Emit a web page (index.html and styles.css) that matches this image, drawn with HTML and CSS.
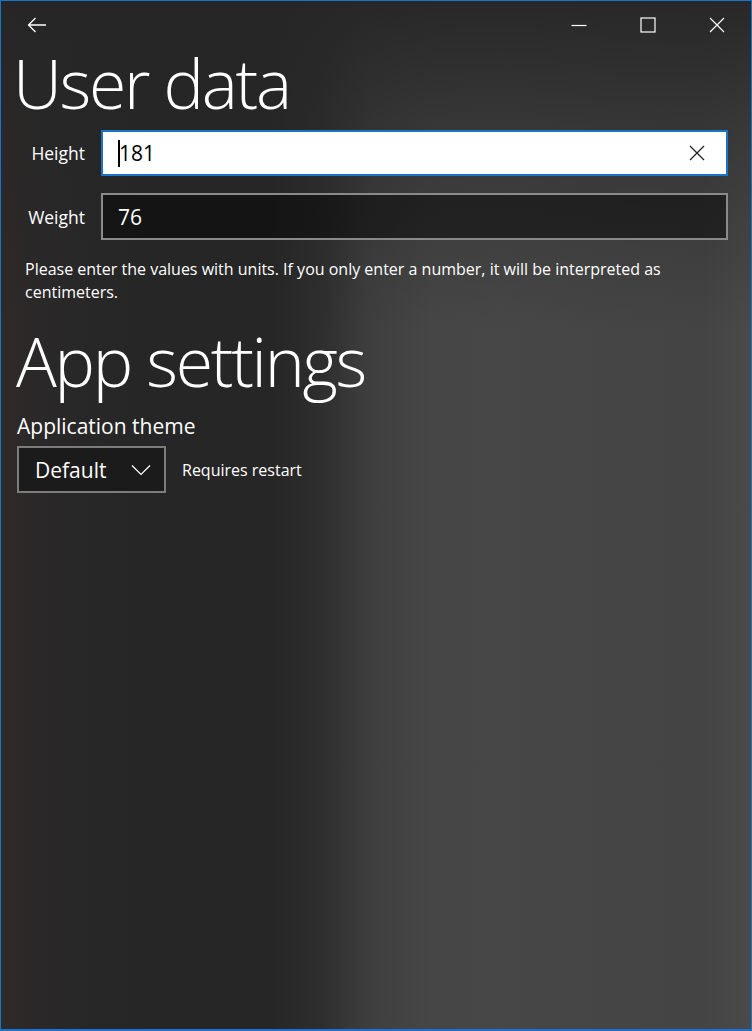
FILE: index.html
```html
<!DOCTYPE html>
<html lang="en">
<head>
  <meta charset="UTF-8">
  <title>Settings</title>
  <link rel="stylesheet" href="styles.css">
</head>
<body>

<div class="window">
  <div class="titlebar">
    <button class="back-button" aria-label="Back">
      <svg width="20" height="16" viewBox="0 0 20 16">
        <path d="M19 8H1.5M8.5 1L1.5 8l7 7" fill="none" stroke="#fff" stroke-width="1.3"/>
      </svg>
    </button>
    <div class="caption-buttons">
      <button class="caption" aria-label="Minimize">
        <svg width="16" height="16" viewBox="0 0 16 16"><path d="M0.5 8.5h15" stroke="#fff" stroke-width="1.2"/></svg>
      </button>
      <button class="caption" aria-label="Maximize">
        <svg width="16" height="16" viewBox="0 0 16 16"><rect x="1" y="1" width="14" height="14" fill="none" stroke="#fff" stroke-width="1.2"/></svg>
      </button>
      <button class="caption" aria-label="Close">
        <svg width="16" height="16" viewBox="0 0 16 16"><path d="M1 1l14 14M15 1L1 15" stroke="#fff" stroke-width="1.2"/></svg>
      </button>
    </div>
  </div>

  <div class="content">
    <h1 class="header">User data</h1>

    <div class="form">
      <label class="field-label" for="height">Height</label>
      <div class="textbox focused">
        <span class="caret"></span>
        <input id="height" value="181">
        <span class="clear">
          <svg width="16" height="16" viewBox="0 0 16 16"><path d="M1 1l14 14M15 1L1 15" stroke="#222" stroke-width="1.3"/></svg>
        </span>
      </div>

      <label class="field-label" for="weight">Weight</label>
      <div class="textbox">
        <input id="weight" value="76">
      </div>
    </div>

    <p class="hint">Please enter the values with units. If you only enter a number, it will be interpreted as centimeters.</p>

    <h1 class="header">App settings</h1>

    <div class="setting-title">Application theme</div>
    <div class="setting-row">
      <div class="combo">
        <span>Default</span>
        <svg width="20" height="12" viewBox="0 0 20 12"><path d="M1 1.5l9 9 9-9" fill="none" stroke="#fff" stroke-width="1.2"/></svg>
      </div>
      <span class="note">Requires restart</span>
    </div>
  </div>
</div>

</body>
</html>
```

FILE: styles.css
```css
* {
  box-sizing: border-box;
}

body {
  margin: 0;
  font-family: "Open Sans", "Noto Sans", sans-serif;
  color: #fff;
  background: #262626;
}

.window {
  width: 752px;
  height: 1031px;
  border: 1px solid #1a74c9;
  border-bottom-width: 2px;
  background:
    linear-gradient(180deg, rgba(38,38,38,0.95) 0, rgba(38,38,38,0.5) 120px, rgba(38,38,38,0) 330px),
    linear-gradient(90deg, #2e2a28 0, #2a2828 40px, #262626 150px, #262626 270px, #2e2e2e 320px, #3f3f3f 370px, #474646 430px, #484747 500px, #454545 600px, #444 700px, #4a4a4a 751px);
  overflow: hidden;
}

.titlebar {
  display: flex;
  justify-content: space-between;
  height: 47px;
}

button {
  background: none;
  border: none;
  padding: 0;
  cursor: pointer;
  display: flex;
  align-items: center;
  justify-content: center;
}

.back-button {
  width: 72px;
  height: 47px;
}

.caption-buttons {
  display: flex;
}

.caption {
  width: 69px;
  height: 47px;
}

.content {
  padding: 0 23px 0 13px;
}

.header {
  font-weight: 300;
  font-size: 68px;
  letter-spacing: -2.3px;
  line-height: 76px;
  margin: -3px 0 0 -1px;
}

.form {
  display: grid;
  grid-template-columns: 60px 1fr;
  column-gap: 16px;
  row-gap: 17px;
  margin: 9px 0 0 11px;
  align-items: center;
}

.field-label {
  text-align: right;
  font-size: 17.5px;
}

.textbox {
  position: relative;
  display: flex;
  align-items: center;
  height: 47px;
  border: 2px solid #8a8a8a;
  background: rgba(0,0,0,0.45);
}

.textbox input {
  flex: 1;
  min-width: 0;
  border: none;
  outline: none;
  background: transparent;
  font-family: inherit;
  font-size: 21px;
  color: #fff;
  padding: 0 0 0 15px;
  height: 100%;
}

.textbox.focused {
  height: 46px;
  border-color: #1a74c9;
  background: #fff;
}

.textbox.focused input {
  color: #000;
  padding-left: 16px;
}

.caret {
  position: absolute;
  left: 15px;
  top: 8px;
  width: 2px;
  height: 27px;
  background: #000;
}

.clear {
  display: flex;
  width: 50px;
  justify-content: center;
  padding-right: 8px;
}

.hint {
  font-size: 16px;
  line-height: 23px;
  margin: 18px 0 0 11px;
}

.hint + .header {
  margin-top: 19px;
  margin-left: 2px;
}

.setting-title {
  font-size: 21px;
  margin: 12px 0 0 3px;
  line-height: 30px;
}

.setting-row {
  display: flex;
  align-items: center;
  gap: 16px;
  margin: 5px 0 0 3px;
}

.combo {
  display: flex;
  align-items: center;
  justify-content: space-between;
  width: 149px;
  height: 47px;
  padding: 0 13px 0 16px;
  border: 2px solid #7c7c7c;
  background: #1b1b1b;
  font-size: 21px;
}

.note {
  font-size: 16px;
}
```
